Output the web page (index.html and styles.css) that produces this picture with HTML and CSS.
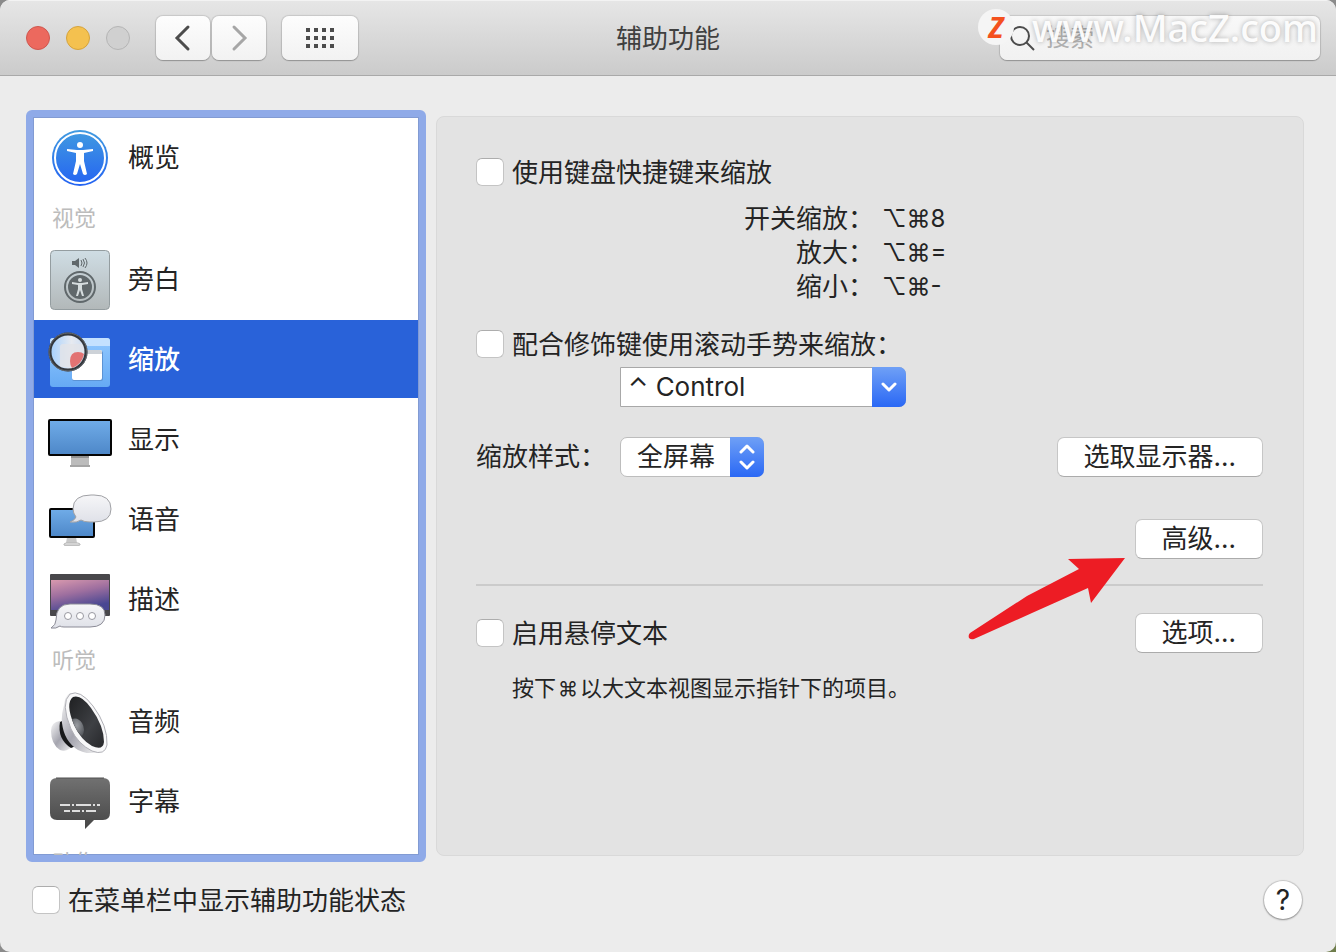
FILE: index.html
```html
<!DOCTYPE html>
<html lang="zh-CN">
<head>
    <meta charset="UTF-8">
    <meta name="viewport" content="width=device-width, initial-scale=1.0">
    <title>辅助功能</title>
    <link rel="stylesheet" href="styles.css">
</head>
<body>

<div class="window">

    <!-- Title bar -->
    <header class="toolbar">
        <div class="toolbar-left">
            <div class="lights">
                <button class="light red" aria-label="关闭"></button>
                <button class="light yellow" aria-label="最小化"></button>
                <button class="light off" aria-label="缩放窗口" disabled></button>
            </div>
            <div class="nav-buttons">
                <button class="tool-btn" aria-label="后退">
                    <svg width="24" height="28" viewBox="0 0 24 28"><path d="M17 3 L6 14 L17 25" fill="none" stroke="#4c4c4c" stroke-width="3" stroke-linecap="round"/></svg>
                </button>
                <button class="tool-btn" aria-label="前进" disabled>
                    <svg width="24" height="28" viewBox="0 0 24 28"><path d="M7 3 L18 14 L7 25" fill="none" stroke="#a6a6a6" stroke-width="3" stroke-linecap="round"/></svg>
                </button>
            </div>
            <button class="tool-btn wide" aria-label="显示全部">
                <svg width="28" height="20" viewBox="0 0 28 20" fill="#4c4c4c">
                    <path d="M0 0h4v4h-4z M8 0h4v4h-4z M16 0h4v4h-4z M24 0h4v4h-4z M0 8h4v4h-4z M8 8h4v4h-4z M16 8h4v4h-4z M24 8h4v4h-4z M0 16h4v4h-4z M8 16h4v4h-4z M16 16h4v4h-4z M24 16h4v4h-4z"/>
                </svg>
            </button>
        </div>
        <h1>辅助功能</h1>
        <div class="toolbar-right">
            <label class="search">
                <svg width="26" height="26" viewBox="0 0 26 26" fill="none" stroke="#4c4c4c" stroke-width="2"><circle cx="10" cy="11" r="9"/><path d="M16.500 17.500 L24 25"/></svg>
                <input type="search" placeholder="搜索" aria-label="搜索">
            </label>
        </div>
        <div class="watermark">
            <span class="mark">Z</span>
            <span class="site">www.MacZ.com</span>
        </div>
    </header>

    <main class="content">

        <!-- Category list -->
        <nav class="sidebar">
            <a class="item" href="#overview">
                <svg viewBox="0 0 64 64">
                    <defs>
                        <linearGradient id="blue" x1="0" y1="0" x2="0" y2="1"><stop offset="0" stop-color="#419be0"/><stop offset="1" stop-color="#2463f2"/></linearGradient>
                    </defs>
                    <circle cx="32" cy="33" r="28" fill="url(#blue)"/>
                    <circle cx="32" cy="33" r="25" fill="none" stroke="#fff" stroke-width="2"/>
                    <circle cx="32" cy="20" r="3" fill="#fff"/>
                    <path d="M19 24 L29 25 H35 L45 24 V26 L36 28 V36 L39 49 Q37 51 35 49 L32 39 L29 49 Q27 51 25 49 L28 36 V28 L19 26 Z" fill="#fff"/>
                </svg>
                <span>概览</span>
            </a>
            <h2>视觉</h2>
            <a class="item" href="#voiceover">
                <svg viewBox="0 0 64 64">
                    <defs>
                        <linearGradient id="silver" x1="0" y1="0" x2="0" y2="1"><stop offset="0" stop-color="#cfdde4"/><stop offset="1" stop-color="#b2b8b9"/></linearGradient>
                    </defs>
                    <rect x="2.500" y="3.500" width="59" height="59" rx="4" fill="url(#silver)" stroke="#949da0"/>
                    <path d="M24 14h3l4-3v10l-4-3h-3z" fill="#60686b"/>
                    <path d="M33 13q2 3 0 6 M35 12q3 4 0 8 M37 11q4 5 0 10" fill="none" stroke="#60686b"/>
                    <circle cx="32" cy="40" r="15" fill="none" stroke="#60686b" stroke-width="2"/>
                    <circle cx="32" cy="40" r="12" fill="#60686b"/>
                    <circle cx="32" cy="33" r="2" fill="#d5dcde"/>
                    <path d="M24 35 L30 36 H34 L40 35 V37 L34 38 V42 L36 49 H34 L32 43 L30 49 H28 L30 42 V38 L24 37 Z" fill="#d5dcde"/>
                </svg>
                <span>旁白</span>
            </a>
            <a class="item selected" href="#zoom" aria-current="page">
                <svg viewBox="0 0 64 64">
                    <defs>
                        <linearGradient id="pane" x1="0" y1="0" x2="0" y2="1"><stop offset="0" stop-color="#91c8ff"/><stop offset="1" stop-color="#66aaf4"/></linearGradient>
                        <linearGradient id="lens" x1="0" y1="0" x2="1" y2="0"><stop offset="0" stop-color="#a4d0ff"/><stop offset=".6" stop-color="#e7eaf0"/><stop offset="1" stop-color="#c9dcf4"/></linearGradient>
                    </defs>
                    <rect x="2" y="11" width="60" height="49" rx="3" fill="url(#pane)"/>
                    <path d="M2 19v-5q0-3 3-3h54q3 0 3 3v5z" fill="#c4e1ff"/>
                    <rect x="24" y="24" width="31" height="30" rx="2" fill="#5c93d4"/>
                    <rect x="24" y="23" width="30" height="30" rx="2" fill="#fff"/>
                    <path d="M24 27v-2q0-2 2-2h26q2 0 2 2v2z" fill="#cdd2d8"/>
                    <circle cx="20" cy="25" r="18" fill="url(#lens)"/>
                    <path d="M12 40V20q0-3 3-3h20l2 8l-7 15z" fill="#e2e4e9" opacity=".8"/>
                    <path d="M22 34q0-9 8-9q4 0 6 2q-2 10-12 14q-2-3-2-7z" fill="#e27373"/>
                    <circle cx="20" cy="25" r="18" fill="none" stroke="#34383d" stroke-width="3"/>
                    <circle cx="20" cy="25" r="19" fill="none" stroke="#666c73"/>
                </svg>
                <span>缩放</span>
            </a>
            <a class="item" href="#display">
                <svg viewBox="0 0 64 64">
                    <defs>
                        <linearGradient id="screen" x1="0" y1="0" x2="0" y2="1"><stop offset="0" stop-color="#70ace8"/><stop offset="1" stop-color="#4d87c8"/></linearGradient>
                    </defs>
                    <path d="M23 48h18v11h-18z" fill="#bcbcbc"/>
                    <path d="M23 48h18v3h-18z" fill="#929292"/>
                    <path d="M22 58h20v2h-20z" fill="#a5a5a5"/>
                    <rect x="1" y="13" width="62" height="35" rx="1" fill="url(#screen)" stroke="#050505" stroke-width="2"/>
                </svg>
                <span>显示</span>
            </a>
            <a class="item" href="#speech">
                <svg viewBox="0 0 64 64">
                    <defs>
                        <linearGradient id="bubble" x1="0" y1="0" x2="0" y2="1"><stop offset="0" stop-color="#f6f6f8"/><stop offset="1" stop-color="#dfe1e8"/></linearGradient>
                    </defs>
                    <path d="M19 50h9l1 6l3 3h-16l2-3z" fill="#c8c8c8"/>
                    <path d="M18 56h12l2 1v1h-16v-1z" fill="#f1f1f1" stroke="#b5b5b5"/>
                    <rect x="2" y="22" width="44" height="28" rx="1" fill="url(#screen)" stroke="#050505" stroke-width="2"/>
                    <path d="M22 35q5-2 6-5q-3-4-3-8q0-14 18-14h3q17 0 17 14q0 13-17 13h-4q-6 0-9-2q-4 3-11 2z" fill="url(#bubble)" stroke="#a0a1a5"/>
                </svg>
                <span>语音</span>
            </a>
            <a class="item" href="#descriptions">
                <svg viewBox="0 0 64 64">
                    <defs>
                        <linearGradient id="sunset" x1="0" y1="0" x2=".4" y2="1"><stop offset="0" stop-color="#d999ae"/><stop offset=".5" stop-color="#9e6f9f"/><stop offset="1" stop-color="#494792"/></linearGradient>
                    </defs>
                    <rect x="2" y="7" width="60" height="42" rx="1" fill="#48474b"/>
                    <path d="M3 13h58v30h-58z" fill="url(#sunset)"/>
                    <path d="M3 61q5-3 5-8q0-16 14-16h20q15 0 15 11q0 12-15 12h-26q-3 0-4-1q-4 3-9 2z" fill="url(#bubble)" stroke="#8b8b96"/>
                    <g fill="#fff" stroke="#9898a0" stroke-width="1"><circle cx="20" cy="49" r="3.500"/><circle cx="32" cy="49" r="3.500"/><circle cx="44" cy="49" r="3.500"/></g>
                </svg>
                <span>描述</span>
            </a>
            <h2>听觉</h2>
            <a class="item" href="#audio">
                <svg viewBox="0 0 64 64">
                    <defs>
                        <linearGradient id="horn" x1="0" y1="0" x2="1" y2="1"><stop offset="0" stop-color="#fafafa"/><stop offset=".5" stop-color="#a4a4ae"/><stop offset="1" stop-color="#f5f5f5"/></linearGradient>
                        <linearGradient id="cone" x1="0" y1="0" x2="1" y2="1"><stop offset="0" stop-color="#1f2022"/><stop offset=".6" stop-color="#3e4044"/><stop offset="1" stop-color="#26272a"/></linearGradient>
                        <radialGradient id="knob" cx=".4" cy=".4" r=".7"><stop offset="0" stop-color="#999ca1"/><stop offset="1" stop-color="#56595e"/></radialGradient>
                    </defs>
                    <path d="M12 32q-9 1-9 10q0 13 9 19q5 2 9-1l4-3z" fill="url(#horn)"/>
                    <path d="M12 33q-3 17 11 26l5-2l-12-26z" fill="#18191b"/>
                    <path d="M22 4q-5 3-6 12q-3 11-2 18q2 18 16 27q10 5 21 3l-14-35z" fill="url(#horn)"/>
                    <path d="M22 5q10-5 23 12q15 20 14 39q-2 11-15 6q-14-7-21-22q-11-26-1-35z" fill="#f8f8f9" stroke="#b0b0b6"/>
                    <path d="M25 8q8-3 18 11q13 18 13 34q-1 9-12 4q-11-6-18-21q-9-22-1-28z" fill="url(#cone)"/>
                    <path d="M24 30q6-2 10 4q4 7 0 13q-6-4-10-17z" fill="url(#knob)"/>
                </svg>
                <span>音频</span>
            </a>
            <a class="item" href="#captions">
                <svg viewBox="0 0 64 64">
                    <defs>
                        <linearGradient id="caption" x1="0" y1="0" x2="0" y2="1"><stop offset="0" stop-color="#717171"/><stop offset="1" stop-color="#464646"/></linearGradient>
                    </defs>
                    <path d="M9 9h46q7 0 7 7v28q0 7-7 7h-9l-9 9v-9h-28q-7 0-7-7v-28q0-7 7-7z" fill="url(#caption)"/>
                    <path d="M8 9h48" stroke="#505050"/>
                    <path d="M12 36h10m2 0h2m2 0h15m2 0h2m2 0h3 M16 42h6m2 0h8m2 0h2m2 0h10" fill="none" stroke="#dedede" stroke-width="2"/>
                </svg>
                <span>字幕</span>
            </a>
            <h2>动作</h2>
        </nav>

        <!-- Zoom settings -->
        <section class="panel">
            <label class="check">
                <input type="checkbox">
                <span>使用键盘快捷键来缩放</span>
            </label>

            <dl class="shortcuts">
                <dt>开关缩放：</dt><dd>⌥⌘8</dd>
                <dt>放大：</dt><dd>⌥⌘=</dd>
                <dt>缩小：</dt><dd>⌥⌘-</dd>
            </dl>

            <label class="check">
                <input type="checkbox">
                <span>配合修饰键使用滚动手势来缩放：</span>
            </label>
            <div class="select combo">
                <select aria-label="修饰键">
                    <option>⌃ Control</option>
                    <option>⌥ Option</option>
                    <option>⌘ Command</option>
                </select>
                <span class="cap"><svg width="16" height="10" viewBox="0 0 16 10"><path d="M2 2 L8 8 L14 2"/></svg></span>
            </div>

            <div class="row style-row">
                <label class="style-label" for="zoom-style">缩放样式：</label>
                <div class="select popup">
                    <select id="zoom-style">
                        <option>全屏幕</option>
                        <option>画中画</option>
                    </select>
                    <span class="cap"><svg width="16" height="26" viewBox="0 0 16 26"><path d="M2 8 L8 2 L14 8 M2 18 L8 24 L14 18"/></svg></span>
                </div>
                <button class="btn">选取显示器...</button>
            </div>

            <div class="row advanced-row">
                <button class="btn">高级...</button>
                <svg class="arrow" width="160" height="86" viewBox="0 0 160 86">
                    <path d="M158 3 L101 4 L112 14 L60 41 L3 78 Q1 80 2 83 Q4 85 7 84 L65 58 L121 33 L124 48 Z" fill="#ed1c24"/>
                </svg>
            </div>

            <hr>

            <div class="row hover-row">
                <label class="check">
                    <input type="checkbox">
                    <span>启用悬停文本</span>
                </label>
                <button class="btn">选项...</button>
            </div>
            <p class="hint">按下<span class="key">⌘</span>以大文本视图显示指针下的项目。</p>
        </section>
    </main>

    <footer class="footer">
        <label class="check">
            <input type="checkbox">
            <span>在菜单栏中显示辅助功能状态</span>
        </label>
        <button class="help" aria-label="帮助">?</button>
    </footer>
</div>

</body>
</html>
```
FILE: styles.css
```css
* {
    margin: 0;
    padding: 0;
    box-sizing: border-box;
}

body {
    font-family: Inter, "Noto Sans CJK SC", sans-serif;
    font-size: 26px;
    line-height: 34px;
    color: #242424;
    background: linear-gradient(135deg, #8b8b8b 60%, #6f7d4c);
}

button,
input,
select {
    font: inherit;
    color: inherit;
}

.window {
    display: flex;
    flex-direction: column;
    height: 100vh;
    background: #ececec;
    border-radius: 10px;
    overflow: hidden;
}

/* Title bar */
.toolbar {
    position: relative;
    flex: none;
    display: grid;
    grid-template-columns: 1fr auto 1fr;
    align-items: center;
    height: 76px;
    background: linear-gradient(#e6e6e6, #cbcbcb);
    border-top: 1px solid #f3f3f3;
    border-bottom: 1px solid #a9a9a9;
}

.toolbar h1 {
    padding-top: 2px;
    font-size: 26px;
    font-weight: 400;
    color: #404040;
}

.toolbar-left {
    display: flex;
    align-items: center;
    padding-left: 26px;
}

.lights {
    display: flex;
    gap: 16px;
    margin-right: 26px;
}

.light {
    width: 24px;
    height: 24px;
    border-radius: 50%;
    border: 1px solid #b5b5b5;
}

.red {
    background: #ec695e;
    border-color: #cf574f;
}

.yellow {
    background: #f4c14f;
    border-color: #d5a33d;
}

.off {
    background: #d0d0d0;
}

.nav-buttons {
    display: flex;
    gap: 2px;
    margin-right: 16px;
}

.tool-btn {
    display: flex;
    align-items: center;
    justify-content: center;
    width: 54px;
    height: 44px;
    background: linear-gradient(#fdfdfd, #f2f2f2);
    border: none;
    border-radius: 7px;
    box-shadow: 0 0 1px 1px rgba(0, 0, 0, 0.12), 0 1px 1px rgba(0, 0, 0, 0.2);
}

.wide {
    width: 76px;
}

.toolbar-right {
    display: flex;
    justify-content: flex-end;
    padding-right: 16px;
}

.search {
    display: flex;
    align-items: center;
    gap: 10px;
    width: 320px;
    height: 44px;
    padding: 0 10px;
    background: linear-gradient(#f8f8f8, #f1f1f1);
    border-radius: 7px;
    box-shadow: 0 0 1px 1px rgba(0, 0, 0, 0.12), 0 1px 1px rgba(0, 0, 0, 0.2);
}

.search svg {
    flex: none;
}

.search input {
    width: 100%;
    font-size: 24px;
    background: none;
    border: none;
    outline: none;
}

.search input::placeholder {
    color: #b0b0b0;
}

.watermark {
    position: absolute;
    top: 3px;
    right: 18px;
    display: flex;
    align-items: center;
    gap: 18px;
    pointer-events: none;
    color: rgba(255, 255, 255, 0.95);
}

.mark {
    width: 36px;
    height: 36px;
    border-radius: 50%;
    background: #f5f5f5;
    color: #f4511e;
    font: italic 700 28px/36px "Noto Sans", sans-serif;
    text-align: center;
}

.site {
    font: 500 38px/46px "Noto Sans", sans-serif;
    text-shadow: 0 0 5px rgba(0, 0, 0, 0.3);
}

/* Main area */
.content {
    flex: 1;
    display: flex;
    gap: 10px;
    min-height: 0;
    padding: 34px 32px 0 26px;
}

.sidebar {
    flex: none;
    width: 400px;
    overflow: hidden;
    background: #fff;
    border: 7px solid #8faae8;
    border-radius: 6px;
    box-shadow: inset 0 0 0 1px #829bd3;
    padding: 1px;
}

.item {
    display: flex;
    align-items: center;
    gap: 16px;
    height: 78px;
    margin-bottom: 2px;
    padding-left: 14px;
    color: #242424;
    text-decoration: none;
}

.item svg {
    width: 64px;
    height: 64px;
}

.item span,
.check span {
    padding-top: 2px;
}

.selected {
    background: #2962d9;
    color: #fff;
    font-weight: 500;
}

.sidebar h2 {
    height: 42px;
    padding-left: 18px;
    font-size: 22px;
    font-weight: 400;
    line-height: 40px;
    color: #bcbcbc;
}

.panel {
    flex: 1;
    margin: 6px 0;
    padding: 35px 40px 35px 39px;
    background: #e3e3e3;
    border: 1px solid #d9d9d9;
    border-radius: 8px;
}

.check {
    display: flex;
    align-items: center;
    gap: 8px;
    height: 40px;
}

.check input {
    appearance: none;
    width: 28px;
    height: 28px;
    background: #fff;
    border: 1px solid #c4c4c4;
    border-top-color: #adadad;
    border-radius: 6px;
}

.shortcuts {
    display: grid;
    grid-template-columns: 398px 1fr;
    column-gap: 8px;
    margin: 10px 0 20px;
}

.shortcuts dt {
    text-align: right;
}

.shortcuts dd {
    font-size: 24px;
}

.select {
    position: relative;
    height: 40px;
}

.select select {
    appearance: none;
    width: 100%;
    height: 40px;
    padding-left: 16px;
    background: #fff;
    border: 1px solid #bdbdbd;
    border-radius: 7px;
    outline: none;
}

.cap {
    position: absolute;
    top: 0;
    right: 0;
    display: flex;
    align-items: center;
    justify-content: center;
    width: 34px;
    height: 40px;
    background: linear-gradient(#6fa0f6, #2a68f5);
    border-radius: 0 7px 7px 0;
    pointer-events: none;
}

.cap path {
    fill: none;
    stroke: #fff;
    stroke-width: 3;
    stroke-linecap: round;
    stroke-linejoin: round;
}

.combo {
    width: 286px;
    margin: 3px 0 0 144px;
}

.combo select {
    padding-left: 7px;
    border-color: #a8a8a8;
    border-radius: 0 7px 7px 0;
}

.popup {
    width: 144px;
}

.row {
    display: flex;
    align-items: center;
    height: 40px;
}

.row .btn {
    margin-left: auto;
}

.style-row {
    margin-top: 30px;
}

.style-label {
    width: 144px;
}

.btn {
    height: 40px;
    min-width: 128px;
    padding: 0 26px;
    background: #fff;
    border: 1px solid #c6c6c6;
    border-bottom-color: #ababab;
    border-radius: 7px;
}

.advanced-row {
    position: relative;
    margin-top: 42px;
}

/* Pointer to the advanced button */
.arrow {
    position: absolute;
    top: 36px;
    right: 136px;
}

hr {
    height: 2px;
    margin: 25px 0 27px;
    background: #cbcbcb;
    border: none;
}

.hint {
    margin: 20px 0 0 36px;
    font-size: 22px;
    line-height: 30px;
}

.key {
    margin: 0 2px;
    font-size: 20px;
}

/* Bottom bar */
.footer {
    flex: none;
    display: flex;
    align-items: center;
    justify-content: space-between;
    padding: 18px 34px 32px 32px;
}

.help {
    width: 38px;
    height: 38px;
    background: #fff;
    border: none;
    border-radius: 50%;
    box-shadow: 0 0 1px 1px rgba(0, 0, 0, 0.15), 0 1px 2px rgba(0, 0, 0, 0.3);
    font-size: 28px;
}
```
